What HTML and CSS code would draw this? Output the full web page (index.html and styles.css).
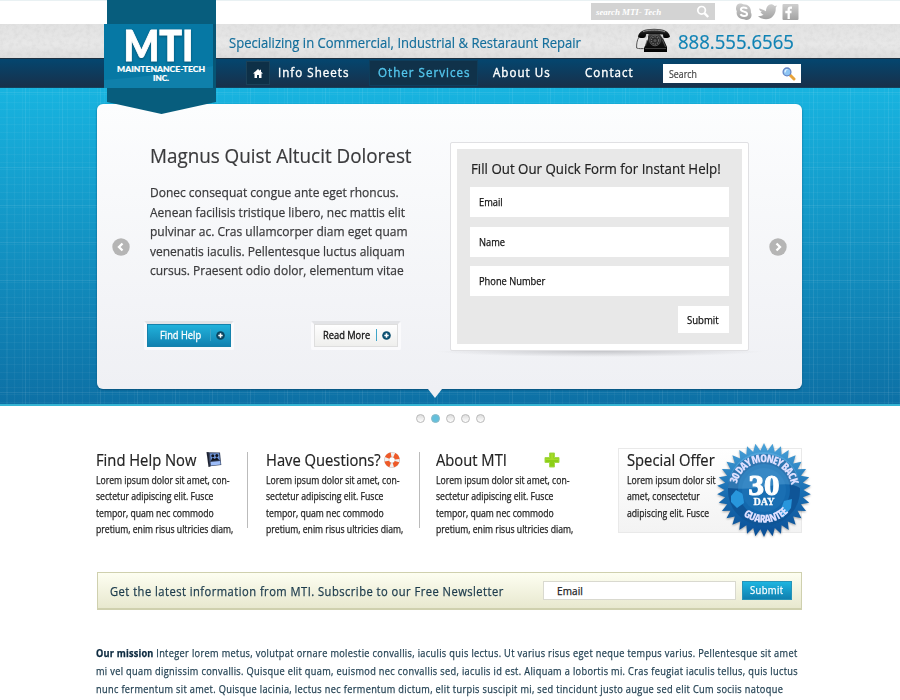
FILE: index.html
```html
<!DOCTYPE html>
<html lang="en">
<head>
<meta charset="utf-8">
<title>MTI Maintenance-Tech Inc.</title>
<link rel="stylesheet" href="styles.css">
</head>
<body>
<header>
  <div class="topbar"><div class="wrap top-row">
    <div class="mini-search"><span>search MTI- Tech</span>
      <svg width="14" height="14" viewBox="0 0 14 14" fill="none" stroke="#fff"><circle cx="5.600" cy="5.300" r="3.800" stroke-width="1.700"/><path d="M8.400 8.200L12.200 12" stroke-width="2.400"/></svg>
    </div>
    <svg class="social" width="64" height="18" viewBox="0 0 64 18">
      <defs><linearGradient id="sg" x1="0" y1="0" x2="0" y2="1"><stop offset="0" stop-color="#cfcfcf"/><stop offset="1" stop-color="#a2a2a2"/></linearGradient></defs>
      <g fill="url(#sg)"><path d="M5 .5c2 0 2.500.5 3.200.7 5 0 8.300 3.500 7.700 8.300 1.800 3-.2 7.500-4.400 7.500-1 0-1.800-.4-2.500-.7C4 16.500.8 12.500 1.800 8.300 0 5 1.500.5 5 .5z"/>
      <path d="M24 5.500c3 .3 5 2 7 2.800C31 4 33.500 1 36.500 1.300c1.500.1 2.500 1 3.200 1.700l2.300-.5-1.300 2.300c.6 5.700-3.400 11.400-9.700 11.400-4 0-6.500-1.500-8-3.200 2 .2 4-.2 5.500-1.300-1.500-.4-2.500-1.400-3-2.600l1.500-.2c-1.500-.8-2.800-2-3-3.400z"/>
      <rect x="47.500" y="1" width="16" height="16" rx="1"/></g>
      <path d="M12 5.800C11.200 4.200 6 3.600 5.900 6.400c0 2.800 6.200 1.600 6.200 4.500 0 2.800-5.700 2.600-6.500.3" fill="none" stroke="#fff" stroke-width="2"/>
      <path d="M57 4.700h-1.400c-1.300 0-1.900.8-1.900 2V16M50.300 9h6.200" fill="none" stroke="#fff" stroke-width="2.300"/>
    </svg>
  </div></div>
  <div class="tagbar">
    <svg class="grain" width="100%" height="34"><filter id="n"><feTurbulence type="fractalNoise" baseFrequency=".22" numOctaves="3"/><feColorMatrix values="0 0 0 0 .45  0 0 0 0 .45  0 0 0 0 .45  .9 0 0 0 -.36"/></filter><rect width="100%" height="34" filter="url(#n)"/></svg>
    <div class="wrap tag-row">
      <span class="tagline"><span class="fit">Specializing in Commercial, Industrial &amp; Restaraunt Repair</span></span>
      <svg class="phone-icon" width="36" height="25" viewBox="0 0 36 25">
        <defs><linearGradient id="pg" x1="0" y1="0" x2="0" y2="1"><stop offset="0" stop-color="#4a4a4a"/><stop offset=".5" stop-color="#141414"/><stop offset="1" stop-color="#000"/></linearGradient></defs>
        <path d="M4 9C2 12 1.500 16 1.600 20c2.500 1 5 .5 7 .6" fill="none" stroke="#555" stroke-width="1"/>
        <path d="M13 6h14l1 4 4 9v5H9v-4l4-9z" fill="url(#pg)"/>
        <path d="M3 8.500C4 3.500 9 .8 19 .8S34 3.500 35 8.500c-1 2-6 2-7.500.8L26.500 6h-15l-1 3.300C9 10.500 4 10.500 3 8.500z" fill="url(#pg)"/>
        <path d="M11 6.500h3l-3.500 5zM28 6.500h-3l3.500 5z" fill="#cfcfcf"/>
        <path d="M8 3.600C14 1.600 25 1.600 30 3.800" fill="none" stroke="#a5a5a5" stroke-width=".8"/>
        <circle cx="20" cy="12.500" r="5.300" fill="#2b2b2b" stroke="#666" stroke-width=".8"/><circle cx="20" cy="12.500" r="3.600" fill="none" stroke="#777" stroke-width="1.200" stroke-dasharray="1.200 1.100"/><circle cx="20" cy="12.500" r="1.600" fill="#555"/>
        <path d="M10 20.500h21" stroke="#555" stroke-width=".7"/><path d="M12 12l-1.500 6M27.500 12l3 7" stroke="#666" stroke-width=".7"/>
      </svg>
      <span class="phone fit">888.555.6565</span>
    </div>
  </div>
  <nav><div class="wrap nav-row">
    <a class="home"><svg width="10" height="9" viewBox="0 0 10 9"><path d="M5 0L0 4.600h1.500V9H4V6h2v3h2.500V4.600H10L8 2.800V.8H6.900v1z" fill="#fff"/></svg></a>
    <a class="n1"><span class="fit">Info Sheets</span></a><a class="n2"><span class="fit">Other Services</span></a><a class="n3"><span class="fit">About Us</span></a><a class="n4"><span class="fit">Contact</span></a>
    <div class="search"><span class="fit">Search</span>
      <svg width="14" height="14" viewBox="0 0 14 14"><path d="M8 8l4 4" stroke="#e8a33a" stroke-width="3" stroke-linecap="round"/><circle cx="5" cy="4.900" r="3.900" fill="#8ec5f4" stroke="#6685c4" stroke-width="1.300"/><path d="M3 5.500c0-2 1-3 2.500-3" stroke="#e7f5ff" stroke-width="1.200" fill="none"/></svg>
    </div>
  </div></nav>
  <svg class="logo" width="114" height="116" viewBox="0 0 114 116">
    <path d="M3 0h109v102L57.500 114 3 102z" fill="#075d7d"/>
    <path d="M0 24h109v64H0z" fill="#0678a4"/>
    <path d="M0 80C40 77 80 72 109 66v22H0z" fill="#0f80ab"/>
    <path d="M109 24h3v64h-3z" fill="#04405f" opacity=".25"/>
    <g fill="#fff" stroke="#fff" font-family="Lato, sans-serif" font-weight="900">
      <g class="logo-shadow"><text x="19.500" y="60.500" font-size="41.500" stroke-width=".9" textLength="70" lengthAdjust="spacingAndGlyphs">MTI</text></g>
      <text x="13" y="72" font-size="8.300" stroke-width=".2" textLength="88" lengthAdjust="spacingAndGlyphs">MAINTENANCE-TECH</text>
      <text x="49" y="81" font-size="8.300" stroke-width=".2" textLength="16" lengthAdjust="spacingAndGlyphs">INC.</text>
    </g>
  </svg>
</header>

<section class="hero"><div class="card">
  <a class="arrow"><svg width="18" height="18" viewBox="0 0 18 18"><circle cx="9" cy="9" r="8.700" fill="#b5b5b5"/><path d="M10.500 5.500L7 9l3.500 3.500" fill="none" stroke="#fff" stroke-width="2.300"/></svg></a>
  <div class="intro">
    <h1><span class="fit">Magnus Quist Altucit Dolorest</span></h1>
    <p class="fit">Donec consequat congue ante eget rhoncus.<br>Aenean facilisis tristique libero, nec mattis elit<br>pulvinar ac. Cras ullamcorper diam eget quam<br>venenatis iaculis. Pellentesque luctus aliquam<br>cursus. Praesent odio dolor, elementum vitae</p>
    <div class="buttons">
      <a class="btn blue"><b class="fit">Find Help</b><i></i><svg width="9" height="9" viewBox="0 0 9 9"><circle cx="4.500" cy="4.500" r="4.300" fill="#0c4560"/><path d="M4.500 2.300v4.400M2.300 4.500h4.400" stroke="#fff" stroke-width="1.500"/></svg></a>
      <a class="btn light"><b class="fit">Read More</b><i></i><svg width="9" height="9" viewBox="0 0 9 9"><circle cx="4.500" cy="4.500" r="4.300" fill="#0c4f70"/><path d="M4.500 2.300v4.400M2.300 4.500h4.400" stroke="#fff" stroke-width="1.600"/></svg></a>
    </div>
  </div>
  <div class="form-frame"><form class="quick">
    <h2><span class="fit">Fill Out Our Quick Form for Instant Help!</span></h2>
    <div class="field"><span class="fit">Email</span></div><div class="field"><span class="fit">Name</span></div><div class="field"><span class="fit">Phone Number</span></div>
    <div class="send"><span class="fit">Submit</span></div>
  </form></div>
  <a class="arrow right"><svg width="18" height="18" viewBox="0 0 18 18"><circle cx="9" cy="9" r="8.700" fill="#b5b5b5"/><path d="M7.500 5.500L11 9l-3.500 3.500" fill="none" stroke="#fff" stroke-width="2.300"/></svg></a>
</div></section>

<div class="dots"><i></i><i class="on"></i><i></i><i></i><i></i></div>

<section class="wrap columns">
  <article class="c1"><h3><span class="fit">Find Help Now</span><svg width="17" height="17" viewBox="0 0 17 17"><path d="M.5 1l2.500 .2L4.500 15.500 2.500 16z" fill="#1d2230"/><path d="M2.500 1.200l11.500.3 1.300 12.500-11.500 1.200z" fill="#3a4763"/><path d="M4 2.500l9-.3.8 7-9 .8z" fill="#6f97dc"/><path d="M4.600 11l9.600-1 .4 3.500-9.600 1z" fill="#9cbcf8"/><circle cx="6.800" cy="4.800" r="1.500" fill="#10131c"/><circle cx="10.800" cy="4.500" r="1.500" fill="#10131c"/><path d="M4.800 10l1.700-3.500 2.300 1.500 2-1.800 2.700 3.200z" fill="#10131c"/></svg></h3>
    <p class="fit">Lorem ipsum dolor sit amet, con-<br>sectetur adipiscing elit. Fusce<br>tempor, quam nec commodo<br>pretium, enim risus ultricies diam,</p></article>
  <article class="c2"><h3><span class="fit">Have Questions?</span><svg width="16" height="16" viewBox="0 0 16 16"><circle cx="8" cy="8" r="5.300" fill="none" stroke="#b9a8a4" stroke-width="5"/><circle cx="8" cy="8" r="5.300" fill="none" stroke="#f2f0ef" stroke-width="4.200"/><circle cx="8" cy="8" r="5.300" fill="none" stroke="#ee5a28" stroke-width="4.600" stroke-dasharray="5.120 3.205" transform="rotate(18 8 8)"/></svg></h3>
    <p class="fit">Lorem ipsum dolor sit amet, con-<br>sectetur adipiscing elit. Fusce<br>tempor, quam nec commodo<br>pretium, enim risus ultricies diam,</p></article>
  <article class="c3"><h3><span class="fit">About MTI</span><svg width="16" height="16" viewBox="0 0 16 16"><path d="M5.500 1h5v4.500H15v5h-4.500V15h-5v-4.500H1v-5h4.500z" fill="#8ccf16" stroke="#a6d94b"/><path d="M6.500 2h3v4.500H14v1.500H2V6.500h4.500z" fill="#b0df30" opacity=".7"/></svg></h3>
    <p class="fit">Lorem ipsum dolor sit amet, con-<br>sectetur adipiscing elit. Fusce<br>tempor, quam nec commodo<br>pretium, enim risus ultricies diam,</p></article>
  <article class="offer"><h3><span class="fit">Special Offer</span></h3>
    <p class="fit">Lorem ipsum dolor sit<br>amet, consectetur<br>adipiscing elit. Fusce</p>
    <svg class="seal" width="100" height="100" viewBox="-50 -50 100 100">
      <defs><linearGradient id="bg" x1="0" y1="0" x2="0" y2="1"><stop offset="0" stop-color="#4aa3da"/><stop offset=".5" stop-color="#1a70b4"/><stop offset="1" stop-color="#0b4f96"/></linearGradient>
      <path id="up" d="M-26.500 8A27.700 27.700 0 1 1 26.500 8"/><path id="dn" d="M-33 5A33.500 33.500 0 0 0 33 5"/></defs>
      <polygon id="burst" fill="url(#bg)"/>
      <circle r="36" fill="#1468ad"/><circle r="31" fill="none" stroke="#0f5597" stroke-width="10"/>
      <path d="M-33 6l5-6 7 4 1 9-7 5-6-6zM16 22l4-11 8-2-1 9-8 10z" fill="#2896dc"/>
      <circle r="22" fill="#1a6fb3"/><path d="M-36-2A36 36 0 0 1 36-2C20-12 0 2-36-2z" fill="#7cc4ee" opacity=".3"/>
      <g fill="#dfe0ff" font-family="Open Sans, sans-serif" font-weight="800" font-size="11">
        <text class="narrow"><textPath href="#up" startOffset="14" textLength="76">30 DAY MONEY BACK</textPath></text>
        <text class="narrow"><textPath href="#dn" startOffset="24" textLength="50">GUARANTEE</textPath></text></g>
      <g fill="#fff" font-family="Liberation Serif, serif" font-weight="700" text-anchor="middle" stroke="#fff">
        <text y="4.500" font-size="29" stroke-width="1.100" textLength="31" lengthAdjust="spacingAndGlyphs">30</text><text y="15" font-size="11" stroke-width=".3" textLength="21" lengthAdjust="spacingAndGlyphs">DAY</text></g>
    </svg>
  </article>
</section>

<section class="wrap newsletter">
  <span class="pitch"><span class="fit">Get the latest information from MTI. Subscribe to our Free Newsletter</span></span>
  <span class="email">Email</span><span class="subscribe"><span class="fit">Submit</span></span>
</section>

<p class="mission fit"><strong>Our mission</strong> Integer lorem metus, volutpat ornare molestie convallis, iaculis quis lectus. Ut varius risus eget neque tempus varius. Pellentesque sit amet<br>mi vel quam dignissim convallis. Quisque elit quam, euismod nec convallis sed, iaculis id est. Aliquam a lobortis mi. Cras feugiat iaculis tellus, quis luctus<br>nunc fermentum sit amet. Quisque lacinia, lectus nec fermentum dictum, elit turpis suscipit mi, sed tincidunt justo augue sed elit Cum sociis natoque</p>
<script src="seal.js"></script>
</body>
</html>
```
FILE: styles.css
```css
* { box-sizing: border-box; }
body { margin: 0; width: 900px; height: 700px; overflow: hidden; background: #fff; font-family: "Open Sans", sans-serif; color: #222; }
h1, h2, h3, p { margin: 0; font-weight: 400; }
svg { display: block; flex: none; }
.wrap { width: 705px; margin-left: 97px; }
/* Slightly condensed setting; each block sets its own --fit ratio. */
.fit { display: inline-block; transform: scaleX(var(--fit, .9)); transform-origin: 0 50%; white-space: nowrap; }

header { position: relative; }
.topbar { height: 24px; border-top: 1px solid #e9f1f3; }
.top-row { display: flex; padding: 2px 0 0 494px; }
.mini-search { width: 124px; height: 17px; background: #d3d3d3; display: flex; align-items: center; justify-content: space-between; padding: 0 5px 0 5px; font: italic 600 9px "Liberation Serif", serif; letter-spacing: -.1px; color: #fff; }
.social { margin: 0 0 0 20px; }
.tagbar { height: 34px; background: linear-gradient(#e2e2e2, #e8e8e8 60%, #dedede); position: relative; }
.grain { position: absolute; inset: 0; opacity: .4; }
.tag-row { position: relative; display: flex; height: 34px; align-items: center; padding-left: 132px; }
.tagline { --fit: .871; flex: none; width: 406px; font-size: 15px; color: #146e9b; padding-top: 2px; -webkit-text-stroke: .2px; }
.phone { --fit: .928; font-size: 20px; color: #0f82b4; margin-left: 7px; -webkit-text-stroke: .2px; }
.phone-icon { margin-top: -1px; }

nav { height: 30px; background: linear-gradient(#04466f, #18304a); border-top: 1px solid #1d2f3f; border-bottom: 1px solid #14415c; }
.nav-row { --fit: .89; display: flex; align-items: center; height: 28px; font-size: 13px; font-weight: 500; letter-spacing: 1.150px; color: #fff; }
.nav-row a { flex: none; height: 24px; line-height: 23px; -webkit-text-stroke: .4px; }
.home { margin-left: 149px; width: 24px; background: #0e3047; border: 1px solid #1b4158; display: flex; align-items: center; justify-content: center; }
.n1 { margin-left: 8px; width: 92px; }
.n2 { width: 107px; padding-left: 8px; background: #10324a; box-shadow: 0 0 0 1px #0e3d5b; color: #53c6ec; }
.n3 { margin-left: 16px; width: 92px; }
.n4 { width: 78px; }
.search { --fit: .88; flex: none; width: 138px; height: 19px; margin-top: 1px; background: #fff; display: flex; align-items: center; justify-content: space-between; padding: 0 5px 0 6px; color: #444; font-size: 10px; letter-spacing: 0; -webkit-text-stroke: .2px; }
.logo { position: absolute; left: 104px; top: 0; z-index: 2; }
.logo-shadow { filter: drop-shadow(0 1.500px 1px #04506f); }

.hero { height: 318px; padding: 16px 0 0 97px; border-bottom: 2px solid #35b4d3; background:
  repeating-linear-gradient(90deg, transparent 0 25px, #ffffff14 25px 26px, transparent 26px 37.500px),
  repeating-linear-gradient(transparent 0 4px, #ffffff14 4px 5px, transparent 5px 37.500px),
  repeating-linear-gradient(90deg, transparent 0 6.500px, #ffffff0a 6.500px 7.500px),
  repeating-linear-gradient(transparent 0 6.500px, #ffffff0a 6.500px 7.500px),
  linear-gradient(#18b4e0, #0d70a5); }
.card { position: relative; display: flex; width: 705px; height: 285px; background: linear-gradient(#fcfdfe, #eff0f4); border-radius: 6px; box-shadow: 0 1px 2px #07507a; }
.card > * { flex: none; }
.card::after { content: ""; position: absolute; left: 331px; top: 100%; border: 7px solid transparent; border-top: 9px solid #eff0f4; border-bottom: 0; }
.arrow { margin: 134px 0 0 15px; }
.arrow.right { margin-left: 20px; }
.intro { width: 320px; padding: 39px 0 0 19.500px; color: #3a3a3c; }
h1 { --fit: .942; font-size: 20px; line-height: 26px; -webkit-text-stroke: .2px; }
.intro p { --fit: .888; display: block; margin-top: 14px; font-size: 13.500px; line-height: 19.600px; -webkit-text-stroke: .25px; }
.buttons { display: flex; gap: 77px; margin: 40px 0 0 -6px; }
.btn { --fit: .93; width: 90px; height: 29px; border: solid #fafafc; border-width: 3px; border-top-color: #e2e3e6; display: flex; align-items: center; gap: 5px; font-size: 10px; border-radius: 2px; -webkit-text-stroke: .3px; }
.btn b { font-weight: 500; }
.btn i { width: 1px; height: 12px; background: #3fa5c8; }
.blue { background: linear-gradient(#22b4dd, #107fae); color: #fff; box-shadow: inset 0 0 0 1px #1582ac; padding-left: 13px; }
.blue b { width: 45px; }
.light { background: linear-gradient(#fff, #eeeeec); color: #111; box-shadow: inset 0 0 0 1px #dedede; padding-left: 9px; }
.light b { width: 48px; }
.form-frame { position: relative; margin: 38px 0 0 0; width: 299px; height: 209px; padding: 6px; border: 1px solid #e0e0e3; border-radius: 2px; background: #fff; }
.form-frame::after { content: ""; position: absolute; left: -16px; right: -16px; top: 208px; height: 6px; background: radial-gradient(50% 100% at 50% 0, #c4c5c9, transparent); }
.quick { height: 195px; background: #e8e8e8; padding: 9px 13px 0 13px; display: flex; flex-direction: column; }
h2 { --fit: .887; font-size: 15px; line-height: 20px; color: #222; margin-bottom: 9px; padding-left: 1px; -webkit-text-stroke: .2px; }
.field { --fit: .93; height: 30px; background: #fff; margin-bottom: 9.700px; padding-left: 9px; font-size: 10px; font-weight: 500; line-height: 30px; color: #111; -webkit-text-stroke: .25px; }
.send { --fit: .93; align-self: flex-end; width: 51px; height: 27px; background: #fff; padding-left: 9px; font-size: 10.300px; font-weight: 500; line-height: 28px; color: #111; -webkit-text-stroke: .25px; }

.dots { display: flex; gap: 6px; margin: 8px 0 0 415.500px; }
.dots i { width: 9px; height: 9px; border-radius: 50%; border: 1px solid #b9b9b9; background: linear-gradient(#ddd, #fff); }
.dots .on { background: #64c0dc; border-color: #8cb9c6; }

.columns { display: flex; margin-top: 29px; margin-left: 96px; height: 81px; }
.columns > * { flex: none; }
h3 { --fit: .922; font-size: 16px; line-height: 22px; height: 24px; color: #222; display: flex; -webkit-text-stroke: .2px; }
h3 .fit { flex: none; width: 110px; }
.columns p { --fit: .865; display: block; font-size: 10px; line-height: 16.500px; font-weight: 500; color: #1b1b1b; margin-top: -1.500px; -webkit-text-stroke: .25px; }
.c1 { width: 152px; height: 76px; border-right: 1px solid #bbb; }
.c2 { width: 154px; height: 76px; margin-left: 18px; border-right: 1px solid #bbb; }
.c3 { width: 182px; margin-left: 15.500px; }
.c1 h3, .c2 h3, .c3 h3 { margin-top: -3px; }
.c1 svg { margin-top: 2px; }
.c2 h3 .fit { width: 118px; }
.c3 h3 .fit { width: 108.500px; }
.c2 svg, .c3 svg { margin-top: 3px; }
.offer { position: relative; width: 184px; height: 85px; padding: 0 0 0 8px; border: 1px solid #e9e9e9; background: linear-gradient(#fff, #f3f3f3); margin-top: -4px; }
.seal { position: absolute; left: 95px; top: -9px; filter: drop-shadow(0 1px 1px #0005); -webkit-text-stroke: 0; }
.narrow { font-stretch: 75%; }

.newsletter { display: flex; align-items: center; margin-top: 39px; height: 38px; border: 1px solid #cfd0ae; border-bottom-width: 2px; background: linear-gradient(#fdfef1, #e8e8cf); color: #1c3b4c; padding-left: 12px; -webkit-text-stroke: .25px; }
.pitch { --fit: .931; flex: none; width: 433px; font-size: 12px; letter-spacing: .5px; font-weight: 500; padding-top: 1px; }
.email { flex: none; width: 193px; height: 19px; border: 1px solid #d9d9cf; background: #fff; padding-left: 13px; font-size: 10px; line-height: 18px; letter-spacing: .1px; color: #222; }
.subscribe { --fit: .9; flex: none; width: 50px; height: 19px; margin-left: 6px; background: linear-gradient(#1db5e0, #1080b0); border: 1px solid #2894b8; color: #fff; padding-left: 7px; font-size: 10.500px; font-weight: 500; line-height: 17px; letter-spacing: .4px; }
.mission { --fit: .92; display: block; margin: 34px 0 0 96px; font-size: 10px; line-height: 18px; letter-spacing: .37px; color: #1f3e50; font-weight: 500; -webkit-text-stroke: .25px; }
.mission strong { color: #0d2a3f; letter-spacing: .2px; }
```
FILE: seal.js
```js
// Builds the toothed outline of the guarantee seal.
const teeth = 34;
const points = [];
for (let i = 0; i < teeth * 2; i++) {
  const r = i % 2 ? 39.5 : 47;
  const a = Math.PI * i / teeth - Math.PI / 2;
  points.push((r * Math.cos(a)).toFixed(2) + ',' + (r * Math.sin(a)).toFixed(2));
}
document.getElementById('burst').setAttribute('points', points.join(' '));
```
